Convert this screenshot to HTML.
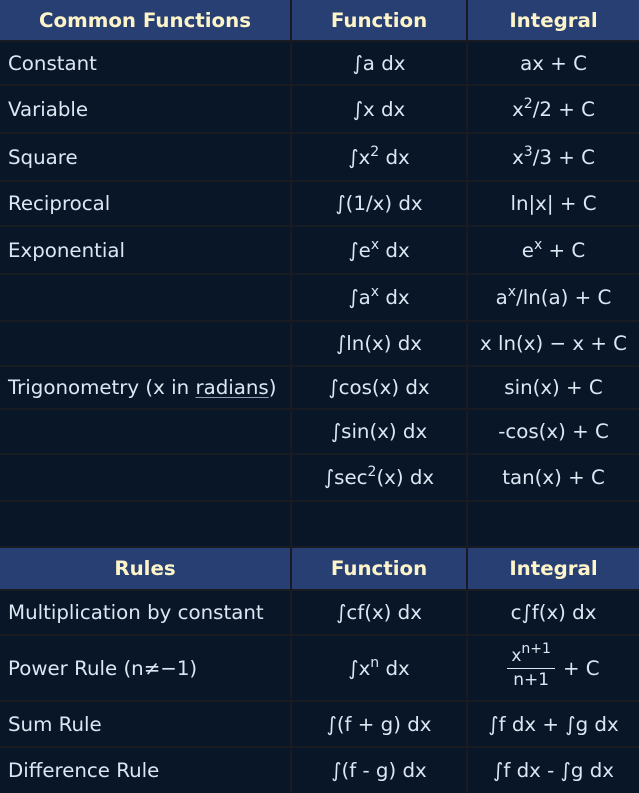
<!DOCTYPE html>
<html><head><meta charset="utf-8"><style>
html,body{margin:0;padding:0;background:#081628;}
body{width:639px;height:785px;overflow:hidden;font-family:"DejaVu Sans","Liberation Sans",sans-serif;font-size:19.8px;color:#dde7f3;}
.r{display:flex;box-sizing:border-box;border-bottom:2px solid #181c22;overflow:hidden;}
.c{box-sizing:border-box;border-right:2px solid #181c22;display:flex;align-items:center;justify-content:center;white-space:nowrap;}
.c1{width:292px;justify-content:flex-start;padding-left:8px;}
.c2{width:176px;}
.c3{width:171px;border-right:none;}
.h{background:#273f72;color:#fdf5c9;font-weight:bold;}
.h .c1{justify-content:center;padding-left:0;}
sup{font-size:14px;vertical-align:8px;line-height:0;}
u{text-decoration-color:#8a9ab0;text-underline-offset:3px;}
.fr{display:inline-flex;flex-direction:column;align-items:center;font-size:17px;margin-right:8px;}
.fr span{padding:0 4px;line-height:23px;}
.fr .t{border-bottom:1px solid #dde7f3;}
</style></head><body>
<div class="r h" style="height:42px"><div class="c c1"><span>Common Functions</span></div><div class="c c2"><span>Function</span></div><div class="c c3"><span>Integral</span></div></div>
<div class="r" style="height:44px"><div class="c c1"><span>Constant</span></div><div class="c c2"><span>∫a dx</span></div><div class="c c3"><span>ax + C</span></div></div>
<div class="r" style="height:48px"><div class="c c1"><span>Variable</span></div><div class="c c2"><span>∫x dx</span></div><div class="c c3"><span>x<sup>2</sup>/2 + C</span></div></div>
<div class="r" style="height:48px"><div class="c c1"><span>Square</span></div><div class="c c2"><span>∫x<sup>2</sup> dx</span></div><div class="c c3"><span>x<sup>3</sup>/3 + C</span></div></div>
<div class="r" style="height:45px"><div class="c c1"><span>Reciprocal</span></div><div class="c c2"><span>∫(1/x) dx</span></div><div class="c c3"><span>ln|x| + C</span></div></div>
<div class="r" style="height:48px"><div class="c c1"><span>Exponential</span></div><div class="c c2"><span>∫e<sup>x</sup> dx</span></div><div class="c c3"><span>e<sup>x</sup> + C</span></div></div>
<div class="r" style="height:47px"><div class="c c1"></div><div class="c c2"><span>∫a<sup>x</sup> dx</span></div><div class="c c3"><span>a<sup>x</sup>/ln(a) + C</span></div></div>
<div class="r" style="height:45px"><div class="c c1"></div><div class="c c2"><span>∫ln(x) dx</span></div><div class="c c3"><span>x ln(x) − x + C</span></div></div>
<div class="r" style="height:43px"><div class="c c1"><span>Trigonometry (x in <u>radians</u>)</span></div><div class="c c2"><span>∫cos(x) dx</span></div><div class="c c3"><span>sin(x) + C</span></div></div>
<div class="r" style="height:45px"><div class="c c1"></div><div class="c c2"><span>∫sin(x) dx</span></div><div class="c c3"><span>-cos(x) + C</span></div></div>
<div class="r" style="height:47px"><div class="c c1"></div><div class="c c2"><span>∫sec<sup>2</sup>(x) dx</span></div><div class="c c3"><span>tan(x) + C</span></div></div>
<div class="r" style="height:46px"><div class="c c1"></div><div class="c c2"></div><div class="c c3"></div></div>
<div class="r h" style="height:43px"><div class="c c1"><span>Rules</span></div><div class="c c2"><span>Function</span></div><div class="c c3"><span>Integral</span></div></div>
<div class="r" style="height:45px"><div class="c c1"><span>Multiplication by constant</span></div><div class="c c2"><span>∫cf(x) dx</span></div><div class="c c3"><span>c∫f(x) dx</span></div></div>
<div class="r" style="height:66px"><div class="c c1"><span>Power Rule (n≠−1)</span></div><div class="c c2"><span>∫x<sup>n</sup> dx</span></div><div class="c c3"><span class="fr"><span class="t">x<sup style="font-size:14px">n+1</sup></span><span>n+1</span></span><span>+ C</span></div></div>
<div class="r" style="height:46px"><div class="c c1"><span>Sum Rule</span></div><div class="c c2"><span>∫(f + g) dx</span></div><div class="c c3"><span>∫f dx + ∫g dx</span></div></div>
<div class="r" style="height:45px;border-bottom:none"><div class="c c1"><span>Difference Rule</span></div><div class="c c2"><span>∫(f - g) dx</span></div><div class="c c3"><span>∫f dx - ∫g dx</span></div></div>
</body></html>
